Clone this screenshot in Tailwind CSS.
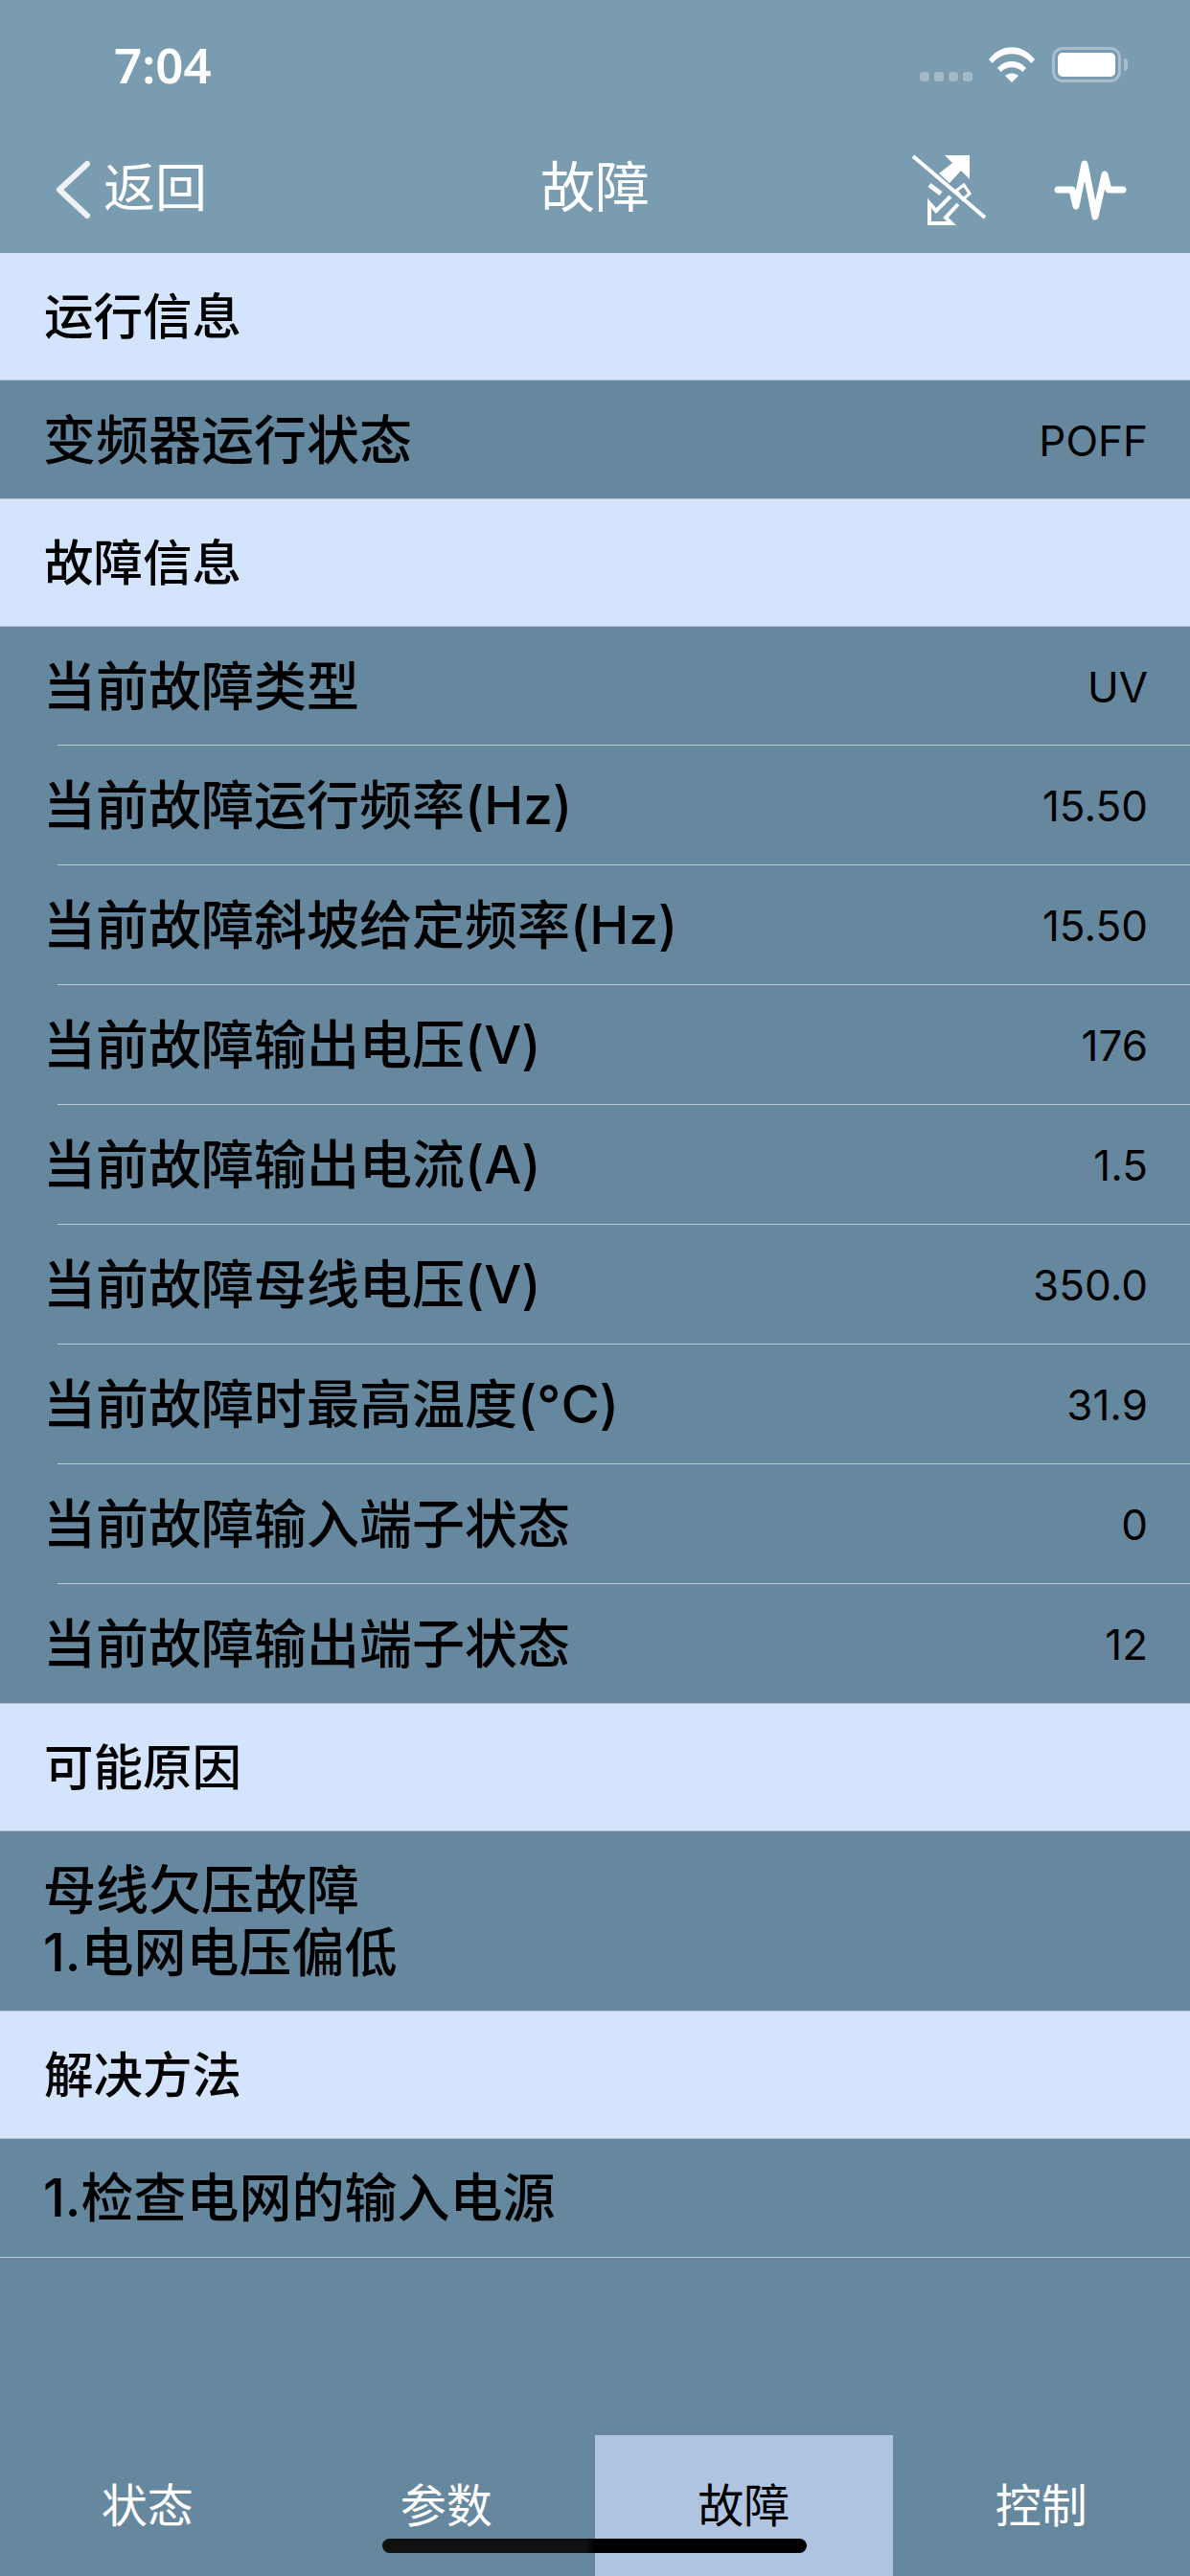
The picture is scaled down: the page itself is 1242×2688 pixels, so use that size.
<!DOCTYPE html>
<html><head><meta charset="utf-8"><script src="https://cdn.jsdelivr.net/npm/@tailwindcss/browser@4"></script></head>
<body class="m-0">
<div class="relative w-[1242px] h-[2688px] overflow-hidden bg-[#66889f] font-['Inter','Noto_Sans_CJK_SC',sans-serif] text-black">
  <header class="bg-[#7a9cb1] h-[264px] relative text-white">
    <div class="h-[132px] relative">
      <span class="absolute left-[119px] top-[34px] font-['Noto_Sans'] text-[51px] leading-[66px] font-semibold">7:04</span>
      <div class="absolute left-[960px] top-[75px] flex gap-[5px]">
        <i class="block w-[10px] h-[10px] rounded-[3px] bg-white/30"></i><i class="block w-[10px] h-[10px] rounded-[3px] bg-white/30"></i><i class="block w-[10px] h-[10px] rounded-[3px] bg-white/30"></i><i class="block w-[10px] h-[10px] rounded-[3px] bg-white/30"></i>
      </div>
      <svg class="absolute left-[1032px] top-[49px]" width="48" height="37" viewBox="0 0 48 37" fill="#fff"><path d="M0 13C13 -4 35 -4 48 13l-3.500 4C33 4 15 4 3.500 17z"/><path d="M9 22c8-9.500 22-9.500 30 0l-3.500 4c-6-6.500-17-6.500-23 0z"/><path d="M17 30c4-3.500 10-3.500 14 0l-7 7z"/></svg>
      <div class="absolute left-[1098px] top-[49px] w-[72px] h-[37px] rounded-[11px] border-[3px] border-white/35 p-[3px]"><div class="w-full h-full rounded-[5px] bg-white"></div></div>
      <div class="absolute left-[1173px] top-[61px] w-[4px] h-[13px] rounded-r-[4px] bg-white/35"></div>
    </div>
    <div class="h-[132px] relative">
      <svg class="absolute left-[57px] top-[34px]" width="38" height="63" viewBox="0 0 38 63" fill="none" stroke="#eef2f5" stroke-width="6" stroke-linecap="round" stroke-linejoin="round"><path d="M34 5L5 32 34 59"/></svg>
      <span class="absolute left-[108px] top-[33px] text-[54px] leading-[64px]">返回</span>
      <span class="absolute left-0 right-0 top-[32px] text-center text-[57px] leading-[64px]">故障</span>
      <svg class="absolute left-[950px] top-[28px]" width="80" height="80" viewBox="0 0 80 80">
        <path d="M3 3L78 67" stroke="#fff" stroke-width="4" fill="none"/>
        <path d="M36 2H62V27L53 18 41 31 30 21 44 10z" fill="#fff"/>
        <path d="M20 33L32 42" stroke="#fff" stroke-width="5" fill="none"/>
        <path d="M48 39L56 33 62 42 55 48z" stroke="#fff" stroke-width="3" fill="none"/>
        <path d="M42 45L27 60 20 52V73H43L37 67 50 53" stroke="#fff" stroke-width="4" fill="none"/>
      </svg>
      <svg class="absolute left-[1100px] top-[28px]" width="76" height="72" viewBox="0 0 76 72" fill="none" stroke="#fff" stroke-width="7" stroke-linecap="round" stroke-linejoin="round"><path d="M4 38H19L23 55 32 11 43 66 53 22 57 38H72"/></svg>
    </div>
  </header>

  <main>
    <section class="h-[133px] bg-[#d3e4fc] pl-[46px] pt-[2px] flex items-center text-[51.500px] font-medium border-b border-[#b8c2cf]">运行信息</section>
    <div class="h-[123px] pl-[45px] pr-[44px] flex items-center justify-between text-[55px] leading-[70px] font-medium"><span>变频器运行状态</span><span class="text-[44px] font-normal pt-[2px]">POFF</span></div>
    <section class="h-[134px] bg-[#d3e4fc] pl-[46px] pt-[2px] flex items-center text-[51.500px] font-medium border-y border-[#b8c2cf]">故障信息</section>
    <div class="pl-[60px]">
      <div class="h-[123px] pr-[44px] flex items-center justify-between text-[55px] leading-[70px] font-medium"><span class="-ml-[15px]">当前故障类型</span><span class="text-[44px] font-normal pt-[2px]">UV</span></div>
      <div class="h-[125px] border-t border-[#b9c8d3] pr-[44px] flex items-center justify-between text-[55px] leading-[70px] font-medium"><span class="-ml-[15px]">当前故障运行频率(Hz)</span><span class="text-[44px] font-normal pt-[2px]">15.50</span></div>
      <div class="h-[125px] border-t border-[#b9c8d3] pr-[44px] flex items-center justify-between text-[55px] leading-[70px] font-medium"><span class="-ml-[15px]">当前故障斜坡给定频率(Hz)</span><span class="text-[44px] font-normal pt-[2px]">15.50</span></div>
      <div class="h-[125px] border-t border-[#b9c8d3] pr-[44px] flex items-center justify-between text-[55px] leading-[70px] font-medium"><span class="-ml-[15px]">当前故障输出电压(V)</span><span class="text-[44px] font-normal pt-[2px]">176</span></div>
      <div class="h-[125px] border-t border-[#b9c8d3] pr-[44px] flex items-center justify-between text-[55px] leading-[70px] font-medium"><span class="-ml-[15px]">当前故障输出电流(A)</span><span class="text-[44px] font-normal pt-[2px]">1.5</span></div>
      <div class="h-[125px] border-t border-[#b9c8d3] pr-[44px] flex items-center justify-between text-[55px] leading-[70px] font-medium"><span class="-ml-[15px]">当前故障母线电压(V)</span><span class="text-[44px] font-normal pt-[2px]">350.0</span></div>
      <div class="h-[125px] border-t border-[#b9c8d3] pr-[44px] flex items-center justify-between text-[55px] leading-[70px] font-medium"><span class="-ml-[15px]">当前故障时最高温度(°C)</span><span class="text-[44px] font-normal pt-[2px]">31.9</span></div>
      <div class="h-[125px] border-t border-[#b9c8d3] pr-[44px] flex items-center justify-between text-[55px] leading-[70px] font-medium"><span class="-ml-[15px]">当前故障输入端子状态</span><span class="text-[44px] font-normal pt-[2px]">0</span></div>
      <div class="h-[125px] border-t border-[#b9c8d3] pr-[44px] flex items-center justify-between text-[55px] leading-[70px] font-medium"><span class="-ml-[15px]">当前故障输出端子状态</span><span class="text-[44px] font-normal pt-[2px]">12</span></div>
    </div>
    <section class="h-[134px] bg-[#d3e4fc] pl-[46px] pt-[2px] flex items-center text-[51.500px] font-medium border-y border-[#b8c2cf]">可能原因</section>
    <div class="h-[187px] pl-[45px] flex flex-col justify-center text-[55px] leading-[65px] font-medium"><div>母线欠压故障</div><div>1.电网电压偏低</div></div>
    <section class="h-[134px] bg-[#d3e4fc] pl-[46px] pt-[2px] flex items-center text-[51.500px] font-medium border-y border-[#b8c2cf]">解决方法</section>
    <div class="h-[124px] pl-[45px] flex items-center text-[55px] font-medium border-b border-[#b9c8d3]">1.检查电网的输入电源</div>
  </main>

  <nav class="absolute left-0 right-0 bottom-0 h-[147px] grid grid-cols-4 text-[48px] text-white">
    <div class="flex justify-center pt-[42px] pr-[3px] leading-[64px]">状态</div>
    <div class="flex justify-center pt-[42px] leading-[64px]">参数</div>
    <div class="flex justify-center pt-[42px] leading-[64px] bg-[#afc4e1] text-black">故障</div>
    <div class="flex justify-center pt-[42px] leading-[64px]">控制</div>
  </nav>
  <div class="absolute left-[399px] top-[2649px] w-[443px] h-[15px] rounded-full bg-[linear-gradient(to_right,#111_0,#111_212px,#000_222px)]"></div>
</div>
</body></html>
